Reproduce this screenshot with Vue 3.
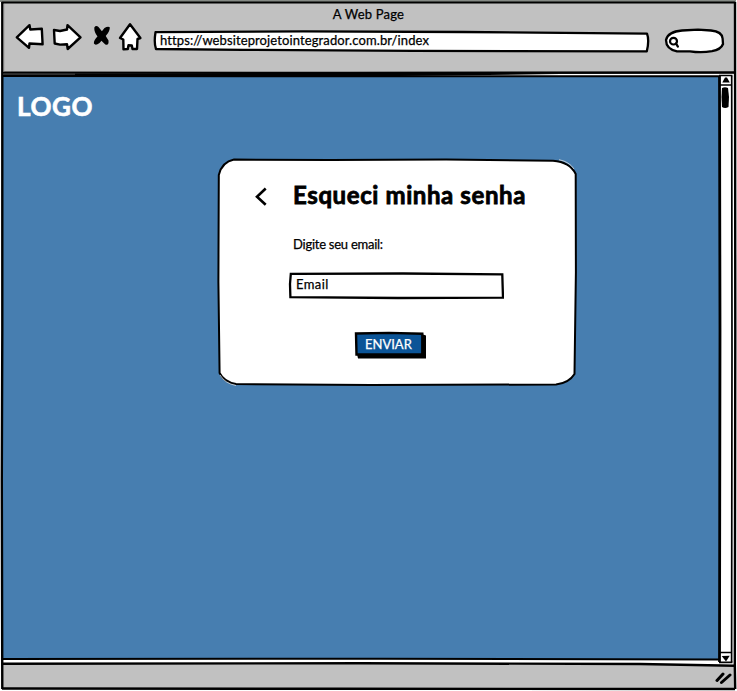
<script setup>
import { ref } from 'vue'

const pageTitle = 'A Web Page'
const url = 'https://websiteprojetointegrador.com.br/index'
const email = ref('Email')
</script>

<template>
  <div class="window">
    <svg class="frame" viewBox="0 0 737 691" aria-hidden="true">
      <rect x="0" y="0" width="736" height="2" fill="#858a85" />
      <path d="M2 2.500H735V689L2 688.500Z" fill="#c1c1c1" />
      <path d="M3 73L734 74V665L3 663Z" fill="#fff" />
      <path d="M3 76H719V659H3Z" fill="#477eb0" />
      <g fill="none" stroke="#000">
        <path d="M1.500 2.500H735" stroke-width="2" />
        <path d="M2.300 2V330L1.800 480L2.300 689" stroke-width="2.400" />
        <path d="M735 2L735.300 330L734.800 665L735.200 689" stroke-width="2.400" />
        <path d="M2 72.600L350 73L735 72.500" stroke-width="2.400" />
        <path d="M2 76L250 76.300L719 76.200" stroke-width="2" />
        <path d="M3 659L380 658.800L720 659.500" stroke-width="2" />
        <path d="M2 663.700L360 663.300L640 664L735 665.800" stroke-width="2.400" />
        <path d="M2 688.500L340 688.800L735 689" stroke-width="2.400" />
      </g>
      <path d="M3 73.500H340L560 74.200L400 76H3Z" fill="#000" />
      <path d="M3 74.200H75" stroke="#555" stroke-width=".8" />
      <path d="M3.800 4V72" stroke="#888" stroke-width=".8" />
    </svg>

    <div class="content">
      <header class="chrome">
        <div class="page-title"><span class="t-title">{{ pageTitle }}</span></div>
        <div class="toolbar">
          <svg class="nav" viewBox="12 20 132 34" aria-label="Navegação">
            <g fill="#fff" stroke="#000" stroke-width="2.400" stroke-linejoin="round">
              <path d="M16.800 37.300L29.500 25.200L30.300 29.500L41.800 28.800L42.600 44.200L29.500 43.500L29 47.800Z" />
              <path d="M54 30L60 31L67 29.500L67.500 25.200L80.500 37.400L67.700 49L67 44.300L60 44.600L54.700 43.500Z" />
              <path d="M130 24.200L140.400 38L137.500 39L137 49H132.500L131.800 45.500L128.500 45.300L127.800 49L123.500 49.300L123.300 39.500L120 38Z" />
            </g>
            <g fill="#000">
              <path d="M94.300 27.500Q96 25 98.500 27Q101.500 31 104.500 34L108.500 40.500Q109 46 105.300 44.500Q101 40.500 97.500 36.500Q94 32 94.300 27.500Z" />
              <path d="M104.500 28Q108 26 109.800 27.300Q110 31 106.500 35L99.500 43Q95.500 46 93.900 43.500Q93.500 40 98 36Z" />
            </g>
          </svg>
          <div class="address">
            <svg class="sketch" viewBox="0 0 498 24" aria-hidden="true">
              <path d="M2.500 3.200L150 2.300L310 3L494 4.600Q496.500 11 493.800 22.300L260 21.900L90 20.800L3 20Q.8 14 2.500 3.200Z" fill="#fff" stroke="#000" stroke-width="2.300" stroke-linejoin="round" />
            </svg>
            <span class="address-text t-url">{{ url }}</span>
          </div>
          <svg class="search" viewBox="663 27 63 28" aria-label="Pesquisar">
            <path d="M666 40Q668 31.500 682 30.500L698 29.700L711 30.500Q722 31.500 722.600 38.500L723 44Q721 49.500 712 51.200Q701 53 690 51.300L677 51.400Q666 49 666 40Z" fill="#fff" stroke="#000" stroke-width="2.300" />
            <ellipse cx="673.500" cy="41.200" rx="3.500" ry="3.300" fill="none" stroke="#000" stroke-width="2.200" />
            <path d="M676 43.500L677.800 46.500" stroke="#000" stroke-width="2.400" stroke-linecap="round" />
          </svg>
        </div>
      </header>

      <div class="viewport">
        <main class="page">
          <div class="logo t-logo">LOGO</div>
          <section class="card">
            <svg class="sketch" viewBox="0 0 362 230" aria-hidden="true">
              <path d="M18 2.600L115 3L230 2.500L337 3.700Q354 5 359.700 17L359.900 115L358.500 217Q353 226 340 227.500L155 228L20 227Q8 225 3.600 216L2.400 125L2.800 18Q6 5 18 2.600Z" fill="#fff" stroke="#000" stroke-width="2" stroke-linejoin="round" />
              <path d="M4 218Q9 226.500 20 228.500M343 2.700Q353 4.500 358 12" fill="none" stroke="#ddd" stroke-width=".8" />
            </svg>
            <div class="card-body">
              <div class="heading">
                <svg class="back" viewBox="0 0 14 20" aria-label="Voltar">
                  <path d="M12.700 1.500L4 9.700L12.700 17.800" fill="none" stroke="#000" stroke-width="2.600" />
                </svg>
                <h1 class="t-heading">Esqueci minha senha</h1>
              </div>
              <label class="label" for="email"><span class="t-label">Digite seu email:</span></label>
              <div class="field">
                <svg class="sketch" viewBox="0 0 216 28" aria-hidden="true">
                  <path d="M2.800 1.800L115 1.500L214.300 2.300L214.600 13L215 25.700L110 26L2.400 25.200L2 12Z" fill="#fff" stroke="#000" stroke-width="2.300" stroke-linejoin="miter" />
                </svg>
                <input id="email" v-model="email" class="t-email" />
              </div>
              <button class="submit" type="button">
                <svg class="sketch" viewBox="0 0 72 28" aria-hidden="true">
                  <path d="M3 23H66L69 3.500L72 4.500V27.500H4Z" fill="#000" />
                  <path d="M2 2.500L35 1.900L68.300 2.700V23.500H2.500Z" fill="#0b5497" stroke="#000" stroke-width="2.400" />
                </svg>
                <span class="t-button">ENVIAR</span>
              </button>
            </div>
          </section>
        </main>
        <svg class="scrollbar" viewBox="717 74 19 592" aria-hidden="true">
          <path d="M720 75H732L732 663H720Z" fill="#fff" />
          <g fill="none" stroke="#000">
            <path d="M719.500 76L720 330L719.500 662" stroke-width="2.800" />
            <path d="M731.700 76L732 350L731.600 662" stroke-width="1.700" />
            <path d="M719 75.500H732.500M720 85H732M720 652.500H732M719 662.300H732.500" stroke-width="1.700" />
          </g>
          <path d="M722.300 82.500L725 77.500H727L729.800 82.500Z" fill="#000" />
          <path d="M721.700 656L729.700 655.700L726 661.500Z" fill="#000" />
          <path d="M722 88Q725 86.500 728 88L729 97L728.500 107Q725 109 722 107L721.500 97Z" fill="#000" />
        </svg>
      </div>

      <footer class="status">
        <svg class="grip" viewBox="0 0 18 14" aria-hidden="true">
          <path d="M2 9.500L8 3M6.500 11.500L15 4" stroke="#000" stroke-width="3" stroke-linecap="round" />
        </svg>
      </footer>
    </div>
  </div>
</template>

<style>
body {
  margin: 0;
  background: #fff;
  overflow: hidden;
}
</style>

<style scoped>
.window {
  display: grid;
  width: 737px;
  height: 691px;
  font-family: Lato, "Liberation Sans", sans-serif;
  font-size: 13px;
  line-height: 16px;
  color: #000;
}

svg {
  display: block;
}

.frame,
.content {
  grid-area: 1 / 1;
  width: 737px;
  height: 691px;
}

.content {
  display: grid;
  grid-template-rows: 74px 592px 25px;
}

.chrome {
  display: flex;
  flex-direction: column;
}

.page-title {
  height: 20px;
  padding-top: 6px;
  box-sizing: border-box;
  text-align: center;
}

.toolbar {
  display: flex;
  align-items: flex-start;
  padding-left: 12px;
}

.nav {
  width: 132px;
  height: 34px;
}

.address {
  display: grid;
  width: 498px;
  height: 24px;
  margin: 9px 0 0 9px;
}

.sketch {
  grid-area: 1 / 1;
  width: 100%;
  height: 100%;
}

.address-text {
  grid-area: 1 / 1;
  padding: 3px 0 0 7px;
}

.search {
  width: 63px;
  height: 28px;
  margin: 7px 0 0 12px;
}

.viewport {
  display: flex;
}

.page {
  width: 717px;
}

.logo {
  height: 83px;
  padding: 16px 0 0 17px;
  box-sizing: border-box;
  color: #fff;
}

.card {
  display: grid;
  width: 362px;
  height: 230px;
  margin-left: 216px;
}

.card-body {
  grid-area: 1 / 1;
  display: flex;
  flex-direction: column;
  align-items: flex-start;
}

.heading {
  display: flex;
  align-items: flex-start;
  height: 79px;
  padding-left: 37px;
}

.back {
  width: 14px;
  height: 20px;
  margin-top: 30px;
}

h1 {
  margin: 23px 0 0 26px;
}

.label {
  height: 36px;
  padding-left: 77px;
}

.field {
  display: grid;
  width: 216px;
  height: 28px;
  margin-left: 72px;
}

.field input {
  grid-area: 1 / 1;
  min-width: 0;
  padding: 0 8px 4px;
  border: 0;
  outline: 0;
  background: none;
  color: inherit;
}

.submit {
  display: grid;
  width: 72px;
  height: 28px;
  margin: 31px 0 0 138px;
  padding: 0;
  border: 0;
  background: none;
  color: #fff;
}

.submit span {
  grid-area: 1 / 1;
  padding: 5px 0 0 11px;
  text-align: left;
}

.scrollbar {
  width: 19px;
  height: 592px;
}

.status {
  display: flex;
  justify-content: flex-end;
  padding: 5px 4px 0 0;
}

.grip {
  width: 18px;
  height: 14px;
}

.t-title,
.t-url,
.t-label,
.t-email,
.t-button {
  font: 13px/16px Lato, "Liberation Sans", sans-serif;
  -webkit-text-stroke: 0.25px currentColor;
  white-space: nowrap;
}

.t-title {
  letter-spacing: 0.2px;
}

.t-url {
  letter-spacing: 0.11px;
}

.t-label {
  letter-spacing: -0.25px;
}

.t-email {
  letter-spacing: 0.4px;
}

.t-logo {
  font: 700 26px/32px Lato, "Liberation Sans", sans-serif;
  letter-spacing: 0.6px;
  -webkit-text-stroke: 0.6px currentColor;
}

.t-heading {
  font: 700 24px/30px Lato, "Liberation Sans", sans-serif;
  letter-spacing: 0.6px;
  -webkit-text-stroke: 0.8px currentColor;
  white-space: nowrap;
}
</style>
